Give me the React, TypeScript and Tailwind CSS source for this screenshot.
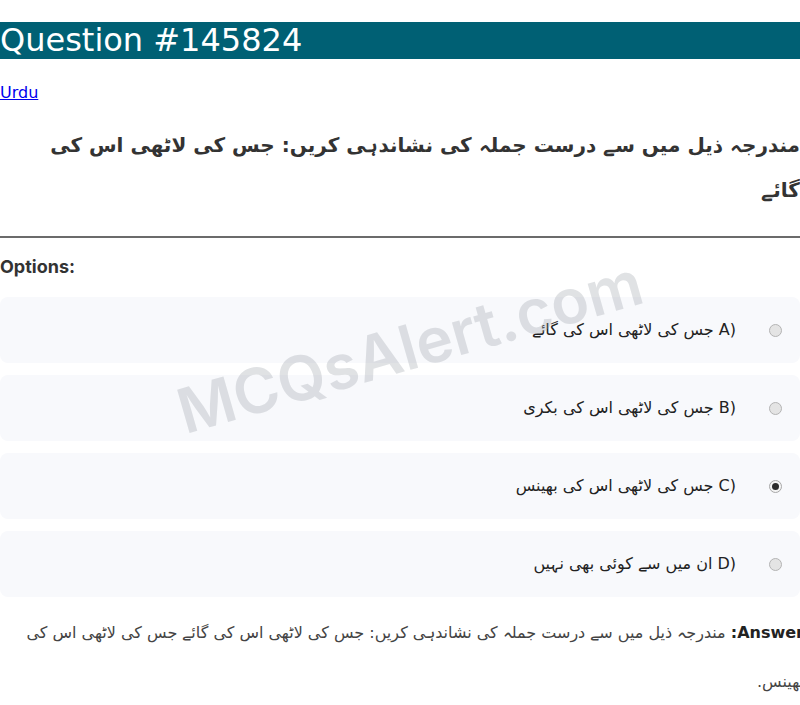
const options = [
  { letter: 'A)', text: 'جس کی لاٹھی اس کی گائے', checked: false },
  { letter: 'B)', text: 'جس کی لاٹھی اس کی بکری', checked: false },
  { letter: 'C)', text: 'جس کی لاٹھی اس کی بھینس', checked: true },
  { letter: 'D)', text: 'ان میں سے کوئی بھی نہیں', checked: false },
]

function Radio({ checked }: { checked: boolean }) {
  return (
    <span
      className={
        checked
          ? 'flex h-[13px] w-[13px] shrink-0 items-center justify-center rounded-full border border-[#a8a8a8] bg-[#f4f4f4]'
          : 'h-[13px] w-[13px] shrink-0 rounded-full border border-[#b4b4b4] bg-[#e4e4e4]'
      }
    >
      {checked && <span className="h-[7px] w-[7px] rounded-full bg-[#2b2b2b]" />}
    </span>
  )
}

export default function App() {
  return (
    <div className="relative w-[800px] overflow-hidden bg-white font-['DejaVu_Sans',sans-serif] text-base text-black">
      <h1 className="mt-[22px] h-[37px] bg-[#006074] text-[32px] leading-[37px] font-normal text-white">
        Question #145824
      </h1>

      <p className="mt-[24px] leading-[19px]">
        <a href="#" className="text-[#0000ee] underline">
          Urdu
        </a>
      </p>

      <h2
        dir="rtl"
        className="mt-[21px] pl-[20px] text-right text-[20px] leading-[45px] font-bold text-[#333]"
      >
        مندرجہ ذیل میں سے درست جملہ کی نشاندہی کریں: جس کی لاٹھی اس کی گائے
      </h2>

      <hr className="mt-[23px] border-t-2 border-[#6b6b6b]" />

      <p className="mt-[16px] font-['Inter',sans-serif] text-[18px] leading-[26px] font-bold text-[#333]">
        Options:
      </p>

      <div className="mt-[17px] flex flex-col gap-[12px]">
        {options.map((o) => (
          <div
            key={o.letter}
            dir="rtl"
            className="flex h-[66px] items-center gap-[33px] rounded-lg bg-[#f8f9fc] pr-[18px] text-[16px] text-[#222]"
          >
            <Radio checked={o.checked} />
            <span>
              <bdi dir="ltr">{o.letter}</bdi> {o.text}
            </span>
          </div>
        ))}
      </div>

      <p
        dir="rtl"
        className="mt-[11px] mr-[-4px] pl-[18px] text-[16px] leading-[49px] text-[#444]"
      >
        <strong className="text-[#222]">Answer:</strong> مندرجہ ذیل میں سے درست جملہ کی نشاندہی کریں: جس کی لاٹھی اس کی گائے جس کی لاٹھی اس کی بھینس.
      </p>

      {/* watermark */}
      <div className="pointer-events-none absolute top-[316px] left-[170px] -rotate-[16deg] font-['Inter',sans-serif] text-[62px] leading-none font-semibold text-[#9aa0a8] opacity-30 select-none">
        MCQsAlert.com
      </div>
    </div>
  )
}
